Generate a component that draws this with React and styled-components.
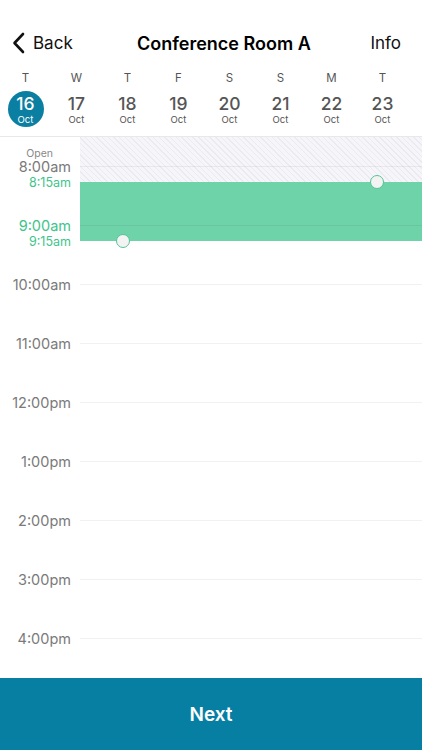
import styled, { createGlobalStyle } from "styled-components"

const Global = createGlobalStyle`
    html, body {
        margin: 0;
        padding: 0;
        background: #fff;
        font-family: Inter, "Liberation Sans", Arial, sans-serif;
    }
`

const Screen = styled.div`
    width: 422px;
    height: 750px;
    display: flex;
    flex-direction: column;
    overflow: hidden;
    background: #fff;
`

const NavBar = styled.div`
    display: grid;
    grid-template-columns: 125px 1fr auto;
    align-items: center;
    height: 44px;
    margin-top: 21px;
    padding: 0 21px 0 12px;
`

const BackButton = styled.div`
    display: flex;
    align-items: center;
    gap: 8px;
    font-size: 17px;
    color: #111;
`

const Title = styled.h1`
    margin: 0;
    font-size: 18px;
    font-weight: 600;
    color: #000;
`

const NavRight = styled.div`
    font-size: 17px;
    color: #111;
`

const DayStrip = styled.div`
    display: flex;
    padding-bottom: 9px;
    border-bottom: 1px solid #e8e8ea;
`

const DayCol = styled.div`
    width: 51px;
    display: flex;
    flex-direction: column;
    align-items: center;
`

const DayLetter = styled.div`
    margin-top: 6px;
    font-size: 11.5px;
    line-height: 14px;
    color: #555;
`

const DateBubble = styled.div`
    margin-top: 6px;
    width: 36px;
    height: 36px;
    border-radius: 50%;
    display: flex;
    flex-direction: column;
    align-items: center;
    padding-top: 3px;
    box-sizing: border-box;
    background: ${p => (p.$active ? "#0b7fa2" : "transparent")};
    color: ${p => (p.$active ? "#fff" : "#555")};
`

const DateNum = styled.div`
    font-size: 17.5px;
    line-height: 20px;
    font-weight: 500;
`

const DateMonth = styled.div`
    font-size: 9.5px;
    line-height: 11px;
`

const Timeline = styled.div`
    position: relative;
    flex: 1;
    overflow: hidden;
`

const HourRow = styled.div`
    position: relative;
    z-index: 1;
    display: grid;
    grid-template-columns: 80px 1fr;
    align-items: center;
    height: 59px;
`

const HourLabel = styled.div`
    text-align: right;
    padding-right: 9px;
    font-size: 14.5px;
    color: ${p => (p.$green ? "#3ec48b" : "#7a7a7a")};
`

const HourLine = styled.div`
    height: 1.5px;
    background: rgba(0, 0, 0, 0.055);
`

const Closed = styled.div`
    position: absolute;
    left: 80px;
    right: 0;
    top: 0;
    height: 45px;
    background: repeating-linear-gradient(
        45deg,
        #f6f5f9 0px,
        #f6f5f9 3px,
        #ebeaf0 3px,
        #ebeaf0 4px
    );
`

const Booking = styled.div`
    position: absolute;
    left: 80px;
    right: 0;
    top: 45px;
    height: 59px;
    background: #6fd3aa;
`

const Handle = styled.div`
    position: absolute;
    z-index: 2;
    width: 12px;
    height: 12px;
    border-radius: 50%;
    background: #f3f3f3;
    border: 1.5px solid #55c495;
    transform: translate(-50%, -50%);
`

const SideNote = styled.div`
    position: absolute;
    z-index: 2;
    right: ${p => p.$right || 351}px;
    transform: translateY(-50%);
    font-size: ${p => p.$size || 12.5}px;
    color: ${p => p.$color || "#3ec48b"};
`

const NextButton = styled.button`
    height: 72px;
    flex-shrink: 0;
    border: none;
    background: #077fa3;
    color: #fff;
    font-family: inherit;
    font-size: 19px;
    font-weight: 600;
`

const days = [
    ["T", 16], ["W", 17], ["T", 18], ["F", 19],
    ["S", 20], ["S", 21], ["M", 22], ["T", 23],
]

const hours = ["8:00am", "9:00am", "10:00am", "11:00am", "12:00pm", "1:00pm", "2:00pm", "3:00pm", "4:00pm"]

const Chevron = () => (
    <svg width="13" height="22" viewBox="0 0 13 22">
        <path d="M11 2 L2.5 11 L11 20" fill="none" stroke="#111" strokeWidth="2.6" strokeLinecap="round" strokeLinejoin="round" />
    </svg>
)

const App = () => {
    return (
        <Screen>
            <Global />
            <NavBar>
                <BackButton><Chevron />Back</BackButton>
                <Title>Conference Room A</Title>
                <NavRight>Info</NavRight>
            </NavBar>
            <DayStrip>
                {days.map(([letter, num], i) => (
                    <DayCol key={num}>
                        <DayLetter>{letter}</DayLetter>
                        <DateBubble $active={i === 0}>
                            <DateNum>{num}</DateNum>
                            <DateMonth>Oct</DateMonth>
                        </DateBubble>
                    </DayCol>
                ))}
            </DayStrip>
            <Timeline>
                <Closed />
                <Booking />
                <SideNote $size={10.5} $color="#888" $right={369} style={{ top: 16 }}>Open</SideNote>
                <SideNote style={{ top: 45 }}>8:15am</SideNote>
                <SideNote style={{ top: 104 }}>9:15am</SideNote>
                <Handle style={{ left: 377, top: 45 }} />
                <Handle style={{ left: 123, top: 104 }} />
                {hours.map(h => (
                    <HourRow key={h}>
                        <HourLabel $green={h === "9:00am"}>{h}</HourLabel>
                        <HourLine />
                    </HourRow>
                ))}
            </Timeline>
            <NextButton>Next</NextButton>
        </Screen>
    )
}

export default App
